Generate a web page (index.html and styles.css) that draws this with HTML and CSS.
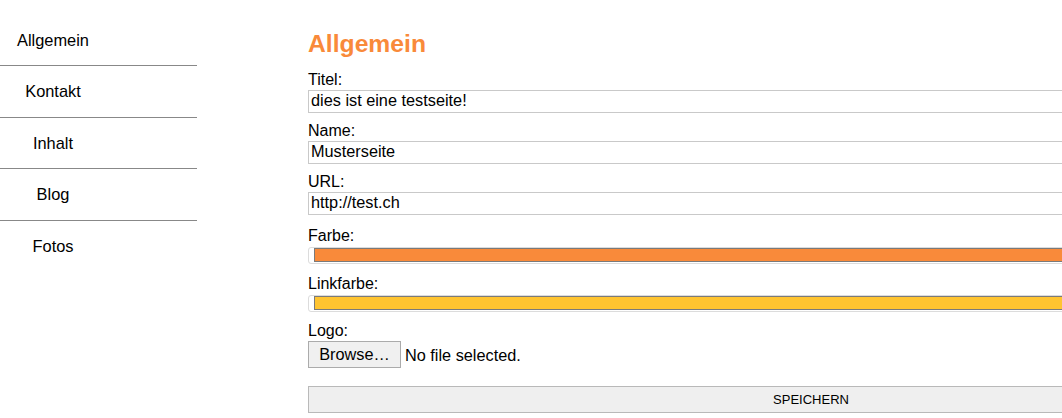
FILE: index.html
```html
<!DOCTYPE html>
<html lang="de">
<head>
<meta charset="utf-8">
<title>Allgemein</title>
<link rel="stylesheet" href="styles.css">
</head>
<body>
<div class="page">
  <nav class="sidebar">
    <ul class="nav">
      <li class="nav-item"><a class="nav-link" href="#">Allgemein</a></li>
      <li class="nav-item"><a class="nav-link" href="#">Kontakt</a></li>
      <li class="nav-item"><a class="nav-link" href="#">Inhalt</a></li>
      <li class="nav-item"><a class="nav-link" href="#">Blog</a></li>
      <li class="nav-item"><a class="nav-link" href="#">Fotos</a></li>
    </ul>
  </nav>
  <main class="main">
    <h1 class="title">Allgemein</h1>
    <form class="form">
      <div class="field">
        <label class="label" for="titel">Titel:</label>
        <input class="text-input" id="titel" type="text" value="dies ist eine testseite!">
      </div>
      <div class="field">
        <label class="label" for="name">Name:</label>
        <input class="text-input" id="name" type="text" value="Musterseite">
      </div>
      <div class="field field-last-text">
        <label class="label" for="url">URL:</label>
        <input class="text-input" id="url" type="text" value="http://test.ch">
      </div>
      <div class="field">
        <label class="label" for="farbe">Farbe:</label>
        <input class="color-input" id="farbe" type="color" value="#f98a3a">
      </div>
      <div class="field field-color-last">
        <label class="label" for="linkfarbe">Linkfarbe:</label>
        <input class="color-input" id="linkfarbe" type="color" value="#ffc430">
      </div>
      <div class="field field-file">
        <label class="label" for="logo">Logo:</label>
        <div class="file-row">
          <button class="browse-btn" type="button">Browse…</button>
          <span class="file-status">No file selected.</span>
        </div>
      </div>
      <button class="save-btn" type="button">SPEICHERN</button>
    </form>
  </main>
</div>
</body>
</html>
```
FILE: styles.css
```css
html, body {
  margin: 0;
  padding: 0;
  overflow: hidden;
  background: #fff;
}

body {
  font-family: "Liberation Sans", Arial, Helvetica, sans-serif;
  font-size: 16px;
  color: #000;
}

.page {
  display: flex;
  align-items: flex-start;
}

.sidebar {
  flex: 0 0 197px;
  width: 197px;
  padding-top: 14.5px;
}

.nav {
  list-style: none;
  margin: 0;
  padding: 0;
}

.nav-item {
  height: 50.5px;
  border-bottom: 1px solid #888;
  display: flex;
  align-items: center;
}

.nav-item:last-child {
  border-bottom: none;
}

.nav-link {
  display: block;
  width: 106px;
  text-align: center;
  color: #000;
  text-decoration: none;
  font-size: 16.4px;
  line-height: 18px;
}

.main {
  flex: 0 0 1006px;
  width: 1006px;
  margin-left: 111px;
}

.title {
  margin: 30px 0 13px;
  font-size: 24.7px;
  line-height: 28px;
  font-weight: bold;
  color: #f98a3a;
}

.form {
  display: flex;
  flex-direction: column;
}

.field {
  display: flex;
  flex-direction: column;
  margin-bottom: 9px;
}

.field-last-text {
  margin-bottom: 12px;
}

.field-color-last {
  margin-bottom: 8px;
}

.label {
  font-size: 16px;
  line-height: 18px;
  margin-bottom: 1px;
}

.text-input {
  box-sizing: border-box;
  width: 100%;
  height: 23px;
  margin: 0;
  padding: 0 2px 2px;
  border: 1px solid #c9c9c9;
  border-radius: 0;
  font-family: "Liberation Sans", Arial, Helvetica, sans-serif;
  font-size: 16.3px;
  color: #000;
  background: #fff;
  outline: none;
}

.color-input {
  -webkit-appearance: none;
  appearance: none;
  box-sizing: border-box;
  width: 100%;
  height: 17px;
  margin: 1px 0 2px;
  padding: 0;
  border: 1px solid #dcdcdc;
  border-radius: 3px;
  background: #fff;
  cursor: pointer;
}

.color-input::-webkit-color-swatch-wrapper {
  padding: 0 0 1px 5px;
}

.color-input::-webkit-color-swatch {
  border: 1px solid #7a7a7a;
  border-radius: 0;
}

.field-file {
  margin-bottom: 18px;
}

.file-row {
  display: flex;
  align-items: center;
  gap: 4px;
}

.browse-btn {
  box-sizing: border-box;
  height: 27px;
  width: 93px;
  margin: 0;
  padding: 0;
  border: 1px solid #ababab;
  border-radius: 0;
  background: #f0f0f0;
  font-family: "Liberation Sans", Arial, Helvetica, sans-serif;
  font-size: 16.3px;
  color: #000;
}

.file-status {
  font-size: 16.3px;
  line-height: 18px;
}

.save-btn {
  box-sizing: border-box;
  width: 100%;
  height: 27px;
  margin: 0;
  padding: 0;
  border: 1px solid #b9b9b9;
  border-radius: 0;
  background: #efefef;
  font-family: "Liberation Sans", Arial, Helvetica, sans-serif;
  font-size: 13px;
  color: #000;
}
```
